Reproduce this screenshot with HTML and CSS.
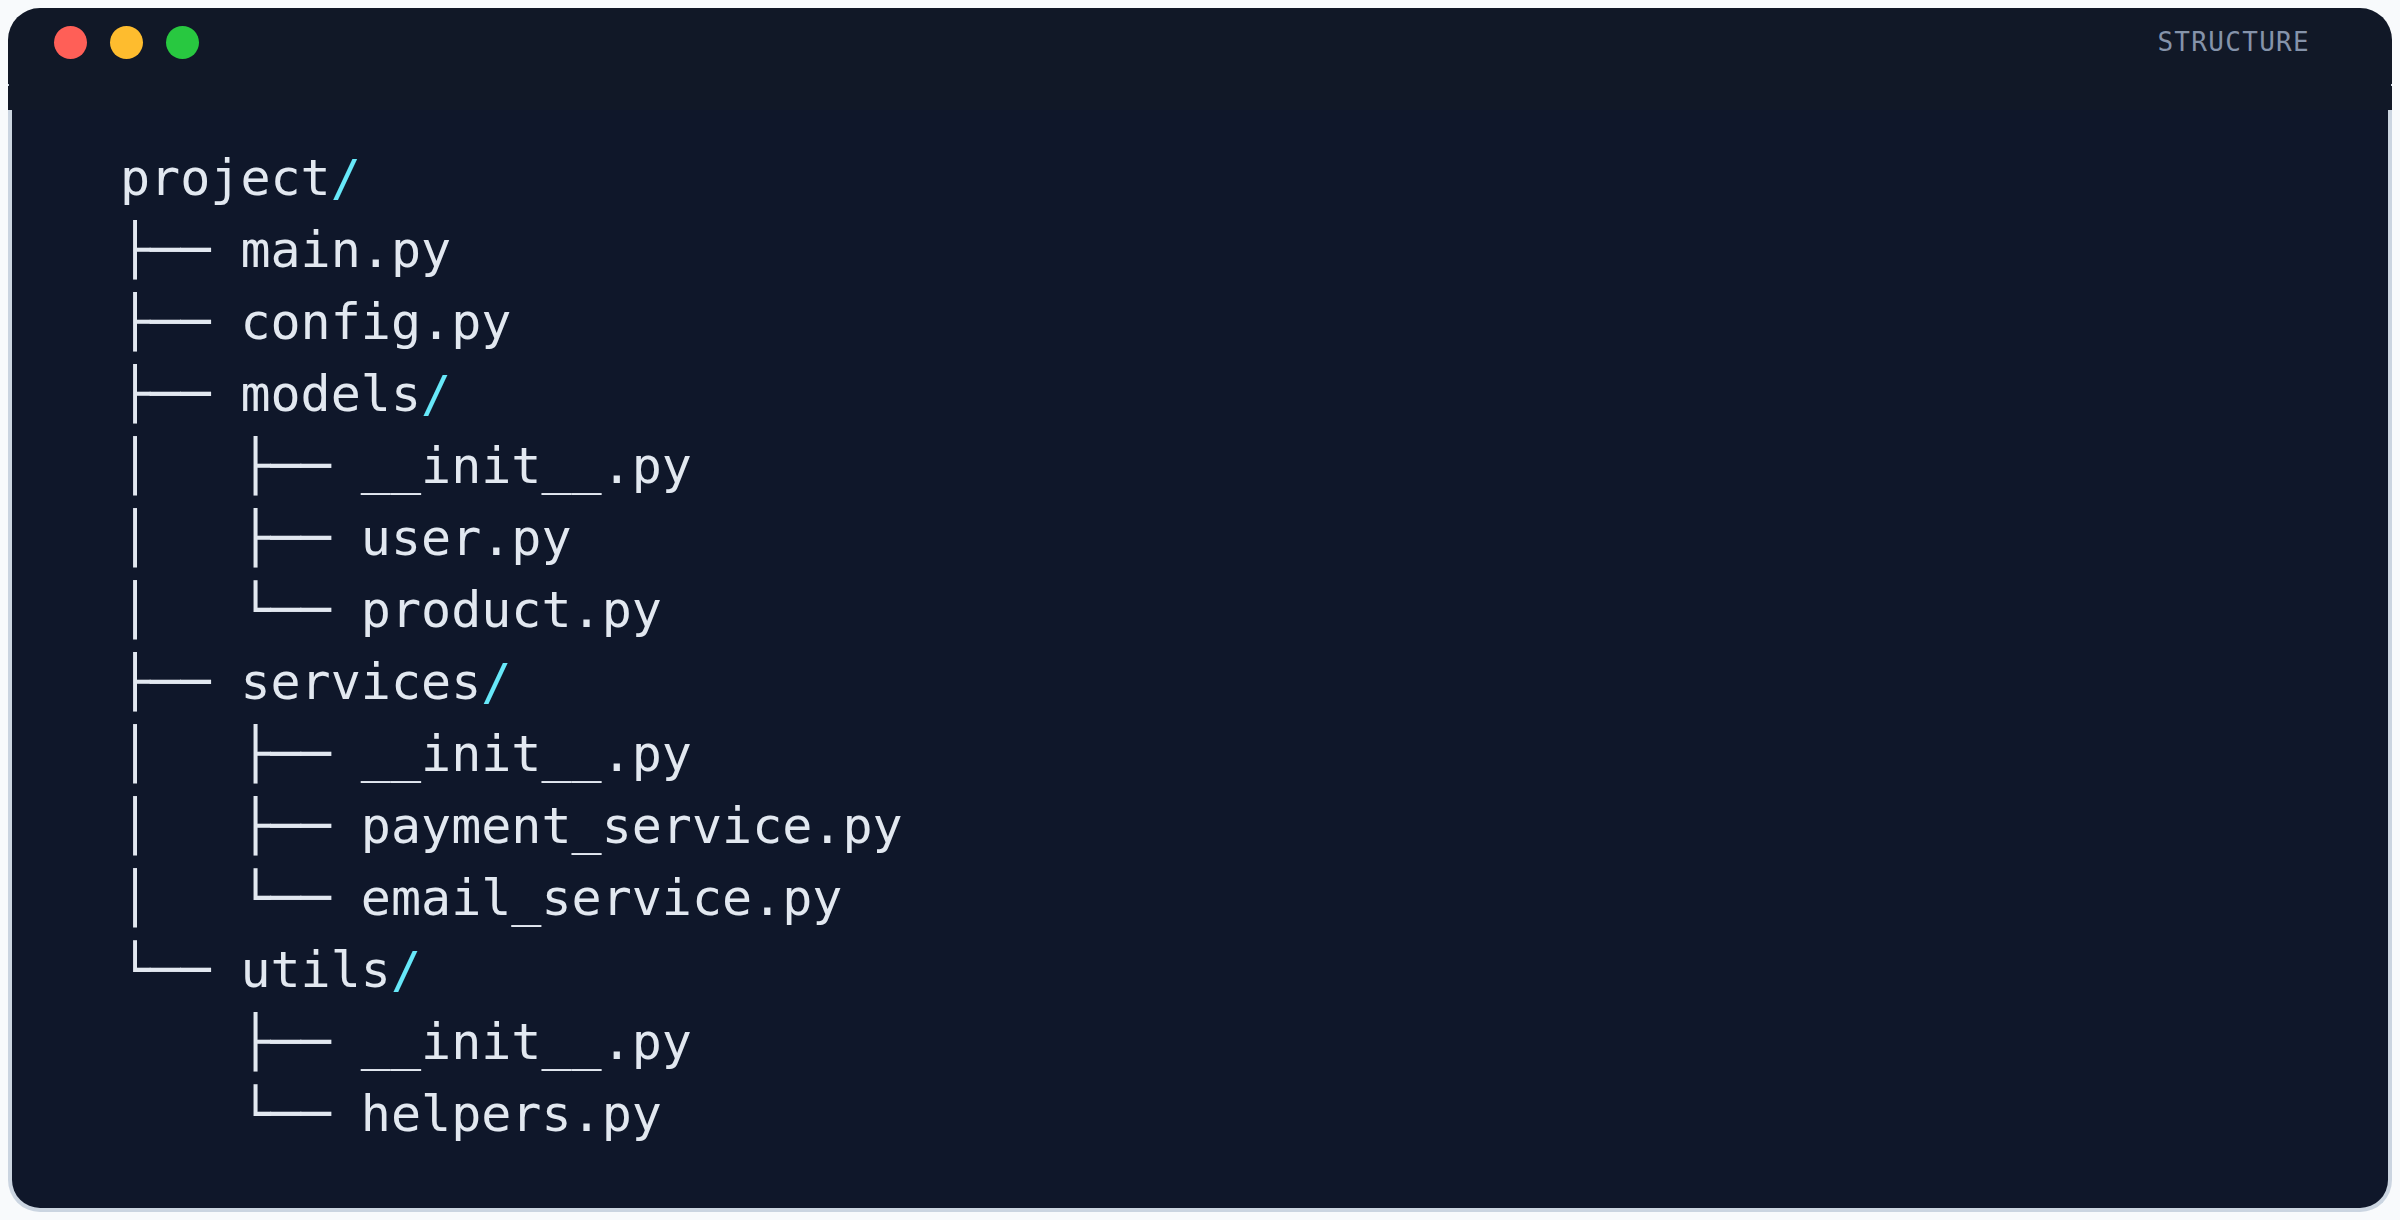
FILE: index.html
```html
<!DOCTYPE html>
<html lang="en">
<head>
<meta charset="utf-8">
<title>Structure</title>
<link rel="stylesheet" href="styles.css">
</head>
<body>
<div class="window">
  <div class="titlebar">
    <div class="dots">
      <span class="dot red"></span>
      <span class="dot yellow"></span>
      <span class="dot green"></span>
    </div>
    <div class="title">STRUCTURE</div>
  </div>
  <div class="content">
<pre class="tree">project<span class="slash">/</span>
├── main.py
├── config.py
├── models<span class="slash">/</span>
│   ├── __init__.py
│   ├── user.py
│   └── product.py
├── services<span class="slash">/</span>
│   ├── __init__.py
│   ├── payment_service.py
│   └── email_service.py
└── utils<span class="slash">/</span>
    ├── __init__.py
    └── helpers.py</pre>
  </div>
</div>
</body>
</html>
```
FILE: styles.css
```css
html {
  margin: 0;
  padding: 0;
}

body {
  margin: 8px;
  background: #f8fafc;
}

.window {
  height: 1204px;
  display: flex;
  flex-direction: column;
}

.titlebar {
  position: relative;
  height: 102px;
  flex: none;
  box-sizing: border-box;
  background: #111827;
  border-radius: 32px 32px 0 0;
  display: flex;
  justify-content: space-between;
  align-items: flex-start;
  padding: 18px 82px 0 46px;
}

.titlebar::before,
.titlebar::after {
  content: "";
  position: absolute;
  top: 76px;
  width: 1px;
  height: 2px;
  background: #cbd5e1;
}

.titlebar::before { left: 0; }
.titlebar::after { right: 0; }

.dots {
  display: flex;
  gap: 23px;
}

.dot {
  width: 33px;
  height: 33px;
  border-radius: 50%;
}

.red { background: #ff5f57; }
.yellow { background: #febc2e; }
.green { background: #28c840; }

.title {
  font-family: "DejaVu Sans Mono", monospace;
  font-size: 26px;
  line-height: 33px;
  letter-spacing: 1.3px;
  color: #8593aa;
}

.content {
  flex: 1;
  background: #0f172a;
  border: 4px solid #cbd5e1;
  border-top: 0;
  border-radius: 0 0 32px 32px;
  padding: 31.5px 0 0 108px;
}

.tree {
  margin: 0;
  font-family: "DejaVu Sans Mono", monospace;
  font-size: 50px;
  line-height: 72px;
  color: #e2e8f0;
}

.slash {
  color: #67e8f9;
}
```
